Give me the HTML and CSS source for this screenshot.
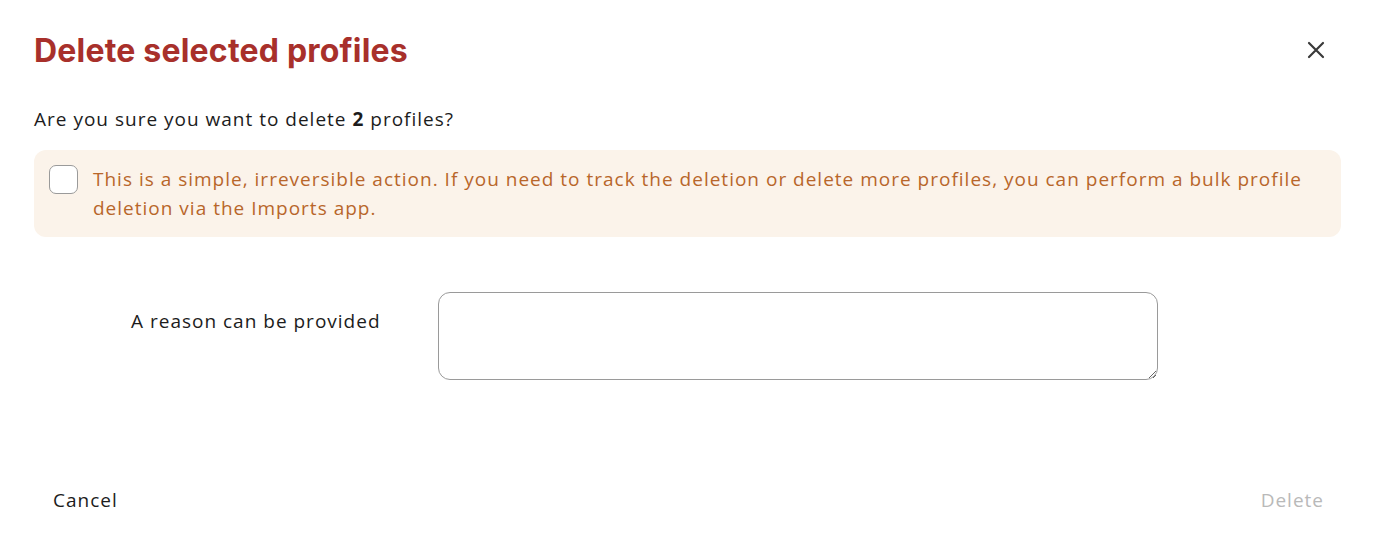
FILE: index.html
```html
<!DOCTYPE html>
<html lang="en">
<head>
<meta charset="utf-8">
<title>Delete selected profiles</title>
<link rel="stylesheet" href="styles.css">
</head>
<body>
<div class="dialog">
  <header class="dialog-header">
    <h1 class="dialog-title">Delete selected profiles</h1>
    <button class="close-btn" aria-label="Close">
      <svg width="18" height="18" viewBox="0 0 18 18"><path d="M2 2 L16 16 M16 2 L2 16" stroke="#3a3a3a" stroke-width="2.2" stroke-linecap="round" fill="none"/></svg>
    </button>
  </header>
  <p class="question">Are you sure you want to delete <strong>2</strong> profiles?</p>
  <div class="notice">
    <span class="checkbox"></span>
    <p class="notice-text">This is a simple, irreversible action. If you need to track the deletion or delete more profiles, you can perform a bulk profile deletion via the Imports app.</p>
  </div>
  <div class="form-row">
    <label class="form-label" for="reason">A reason can be provided</label>
    <textarea id="reason" class="form-input"></textarea>
  </div>
  <footer class="dialog-footer">
    <button class="btn btn-cancel">Cancel</button>
    <button class="btn btn-delete" disabled>Delete</button>
  </footer>
</div>
</body>
</html>
```
FILE: styles.css
```css
* { box-sizing: border-box; }
html, body { margin: 0; padding: 0; background: #fff; }
body { font-family: "Open Sans", "Noto Sans", sans-serif; color: #1c1c1c; }
.dialog {
  width: 1378px;
  height: 558px;
  padding: 24px 37px 0 34px;
  display: flex;
  flex-direction: column;
}
.dialog-header {
  display: flex;
  justify-content: space-between;
  align-items: center;
  height: 52px;
}
.dialog-title {
  margin: 0;
  font-family: "Inter", sans-serif;
  font-weight: 700;
  font-size: 32px;
  letter-spacing: 0.2px;
  color: #a8302b;
}
.close-btn {
  background: none;
  border: 0;
  padding: 0;
  margin-right: 16px;
  width: 18px;
  height: 18px;
  display: flex;
  cursor: pointer;
}
.question {
  margin: 29px 0 0;
  font-size: 19px;
  line-height: 28px;
  letter-spacing: 1px;
}
.question strong { font-weight: 700; }
.notice {
  margin-top: 17px;
  background: #fbf3ea;
  border-radius: 12px;
  padding: 15px 20px 14px 15px;
  display: flex;
  gap: 15px;
  align-items: flex-start;
}
.checkbox {
  flex: none;
  width: 29px;
  height: 29px;
  background: #fff;
  border: 1px solid #9a9a9a;
  border-radius: 7px;
}
.notice-text {
  margin: 0;
  font-size: 19px;
  line-height: 29px;
  letter-spacing: 1px;
  color: #b8662a;
}
.form-row {
  margin-top: 55px;
  display: flex;
  align-items: flex-start;
  padding-left: 97px;
}
.form-label {
  width: 307px;
  padding-top: 15px;
  font-size: 19px;
  line-height: 28px;
  letter-spacing: 1px;
  color: #1c1c1c;
}
.form-input {
  width: 720px;
  height: 88px;
  border: 1px solid #9a9a9a;
  border-radius: 12px;
  resize: vertical;
  font-family: inherit;
  font-size: 18px;
  padding: 10px 14px;
}
.dialog-footer {
  margin-top: auto;
  margin-bottom: 37px;
  display: flex;
  justify-content: space-between;
}
.btn {
  background: none;
  border: 0;
  font-family: "Open Sans", sans-serif;
  font-size: 19px;
  letter-spacing: 1px;
  padding: 8px 19px;
  cursor: pointer;
}
.btn-cancel { color: #1c1c1c; font-weight: 500; }
.btn-delete { color: #b9b9b9; padding-right: 17px; cursor: default; }
```
